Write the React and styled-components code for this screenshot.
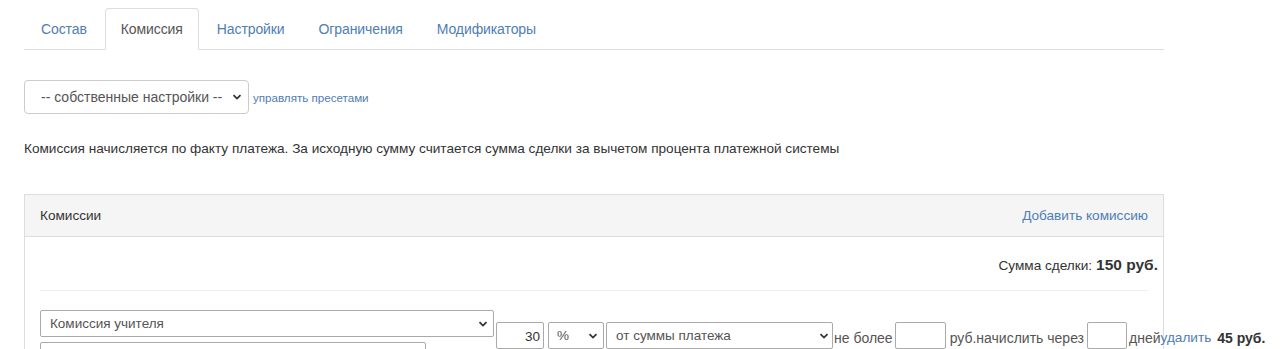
import React from "react";
import styled, { createGlobalStyle } from "styled-components";

const Global = createGlobalStyle`
  html, body { margin: 0; padding: 0; background: #fff; }
  body { font-family: "Liberation Sans", Arial, sans-serif; color: #333; font-size: 13.5px; }
  * { box-sizing: border-box; }
`;

const Page = styled.div`
  padding: 8px 24px 0 24px;
  width: 1280px;
  overflow: hidden;
  height: 349px;
`;

const Content = styled.div`
  width: 1140px;
`;

const Tabs = styled.ul`
  display: flex;
  list-style: none;
  margin: 0;
  padding: 0;
  border-bottom: 1px solid #ddd;
  height: 42px;
`;

const Tab = styled.li`
  margin-right: 2px;
  margin-bottom: -1px;
  padding: 0 15px 0 ${(p) => (p.$first ? 16 : 15)}px;
  height: 42px;
  display: flex;
  align-items: center;
  font-size: 14px;
  letter-spacing: -0.1px;
  border: 1px solid ${(p) => (p.$active ? "#ddd" : "transparent")};
  border-bottom-color: ${(p) => (p.$active ? "#fff" : "transparent")};
  border-radius: 4px 4px 0 0;
  background: ${(p) => (p.$active ? "#fff" : "transparent")};
  color: ${(p) => (p.$active ? "#555" : "#4f7db5")};
  cursor: pointer;
`;

const PresetRow = styled.div`
  display: flex;
  align-items: center;
  margin-top: 30px;
  gap: 4px;
`;

const Select = styled.div`
  position: relative;
  display: flex;
  align-items: center;
  width: ${(p) => p.$w}px;
  height: ${(p) => p.$h || 34}px;
  border: 1px solid ${(p) => p.$border || "#ccc"};
  border-radius: ${(p) => (p.$square ? "2px" : "4px")};
  padding-left: ${(p) => p.$pl || 8}px;
  margin-left: ${(p) => p.$ml || 0}px;
  font-size: ${(p) => p.$fs || 13.5}px;
  color: #555;
  white-space: nowrap;
  background: #fff;
  flex: none;
`;

const Chevron = styled.svg`
  position: absolute;
  right: ${(p) => p.$r || 6}px;
  top: 50%;
  margin-top: -4px;
  width: 10px;
  height: 8px;
`;

const Chev = ({ r }) => (
  <Chevron $r={r} viewBox="0 0 10 8">
    <path d="M1.5 2.2 L5 5.6 L8.5 2.2" fill="none" stroke="#333" strokeWidth="1.8" />
  </Chevron>
);

const SmallLink = styled.a`
  font-size: 11.6px;
  color: #4f7db5;
  text-decoration: none;
`;

const Note = styled.p`
  margin: 26px 0 0 0;
  font-size: 13.6px;
  color: #333;
  line-height: 18px;
  white-space: nowrap;
`;

const Panel = styled.div`
  margin-top: 36px;
  border: 1px solid #ddd;
  border-bottom: none;
  height: 200px;
`;

const PanelHeading = styled.div`
  display: flex;
  justify-content: space-between;
  align-items: center;
  height: 42px;
  padding: 0 15px;
  background: #f5f5f5;
  border-bottom: 1px solid #ddd;
  font-size: 13.6px;
  color: #333;
`;

const Link = styled.a`
  color: #4f7db5;
  text-decoration: none;
  font-size: ${(p) => p.$fs || 13.6}px;
  padding-top: ${(p) => p.$pt || 0}px;
`;

const PanelBody = styled.div`
  padding: 0 15px;
`;

const Total = styled.div`
  display: flex;
  justify-content: flex-end;
  align-items: baseline;
  gap: 4px;
  padding-top: 19px;
  height: 53px;
  margin-right: -10px;
  font-size: 13.6px;
  color: #333;
  b { font-size: 15.5px; font-weight: bold; }
`;

const Divider = styled.hr`
  border: none;
  border-top: 1px solid #eee;
  margin: 0;
`;

const Row = styled.div`
  display: flex;
  align-items: flex-start;
  margin-top: 19px;
  white-space: nowrap;
`;

const LeftCol = styled.div`
  display: flex;
  flex-direction: column;
  gap: 5px;
  width: 456px;
  flex: none;
`;

const Controls = styled.div`
  display: flex;
  align-items: center;
  margin-top: 12px;
  font-size: 14px;
  color: #555;
`;

const NumInput = styled.div`
  width: ${(p) => p.$w}px;
  height: 27px;
  border: 1px solid #aaa;
  border-radius: 2px;
  font-size: 13.5px;
  color: #333;
  text-align: right;
  padding: 6px 3px 0 0;
  margin: 0 ${(p) => p.$mr || 3}px 0 ${(p) => p.$ml || 0}px;
  flex: none;
`;

const Label = styled.span`
  color: #555;
  font-size: 14px;
  padding-top: 4px;
  margin: ${(p) => p.$m || "0"};
`;

const Amount = styled.b`
  color: #333;
  font-size: 14px;
  padding-top: 4px;
  margin-left: 6px;
`;

export default function App() {
  return (
    <>
      <Global />
      <Page>
        <Content>
          <Tabs>
            <Tab $first>Состав</Tab>
            <Tab $active>Комиссия</Tab>
            <Tab>Настройки</Tab>
            <Tab>Ограничения</Tab>
            <Tab>Модификаторы</Tab>
          </Tabs>

          <PresetRow>
            <Select $w={225} $pl={16} $fs={14}>
              -- собственные настройки --
              <Chev r={6} />
            </Select>
            <SmallLink href="#">управлять пресетами</SmallLink>
          </PresetRow>

          <Note>
            Комиссия начисляется по факту платежа. За исходную сумму считается сумма сделки за вычетом процента платежной системы
          </Note>

          <Panel>
            <PanelHeading>
              <span>Комиссии</span>
              <Link href="#">Добавить комиссию</Link>
            </PanelHeading>
            <PanelBody>
              <Total>
                <span>Сумма сделки:</span>
                <b>150 руб.</b>
              </Total>
              <Divider />
              <Row>
                <LeftCol>
                  <Select $w={454} $h={27} $square $border="#aaa" $pl={9}>
                    Комиссия учителя
                    <Chev r={5} />
                  </Select>
                  <Select $w={386} $h={27} $square $border="#aaa" $pl={9}>
                    Баланс Мастера
                  </Select>
                </LeftCol>
                <Controls>
                  <NumInput $w={48} $mr={4}>30</NumInput>
                  <Select $w={56} $h={27} $square $border="#aaa" $pl={8}>
                    %
                    <Chev r={5} />
                  </Select>
                  <Select $w={227} $h={27} $square $border="#aaa" $pl={9} $ml={2}>
                    от суммы платежа
                    <Chev r={3} />
                  </Select>
                  <Label $m="0 2px 0 1px">не более</Label>
                  <NumInput $w={51} $mr={4} />
                  <Label>руб.начислить через</Label>
                  <NumInput $w={40} $ml={3} $mr={2} />
                  <Label>дней</Label>
                  <Link href="#" $fs={13.6} $pt={4}>удалить</Link>
                  <Amount>45 руб.</Amount>
                </Controls>
              </Row>
            </PanelBody>
          </Panel>
        </Content>
      </Page>
    </>
  );
}
